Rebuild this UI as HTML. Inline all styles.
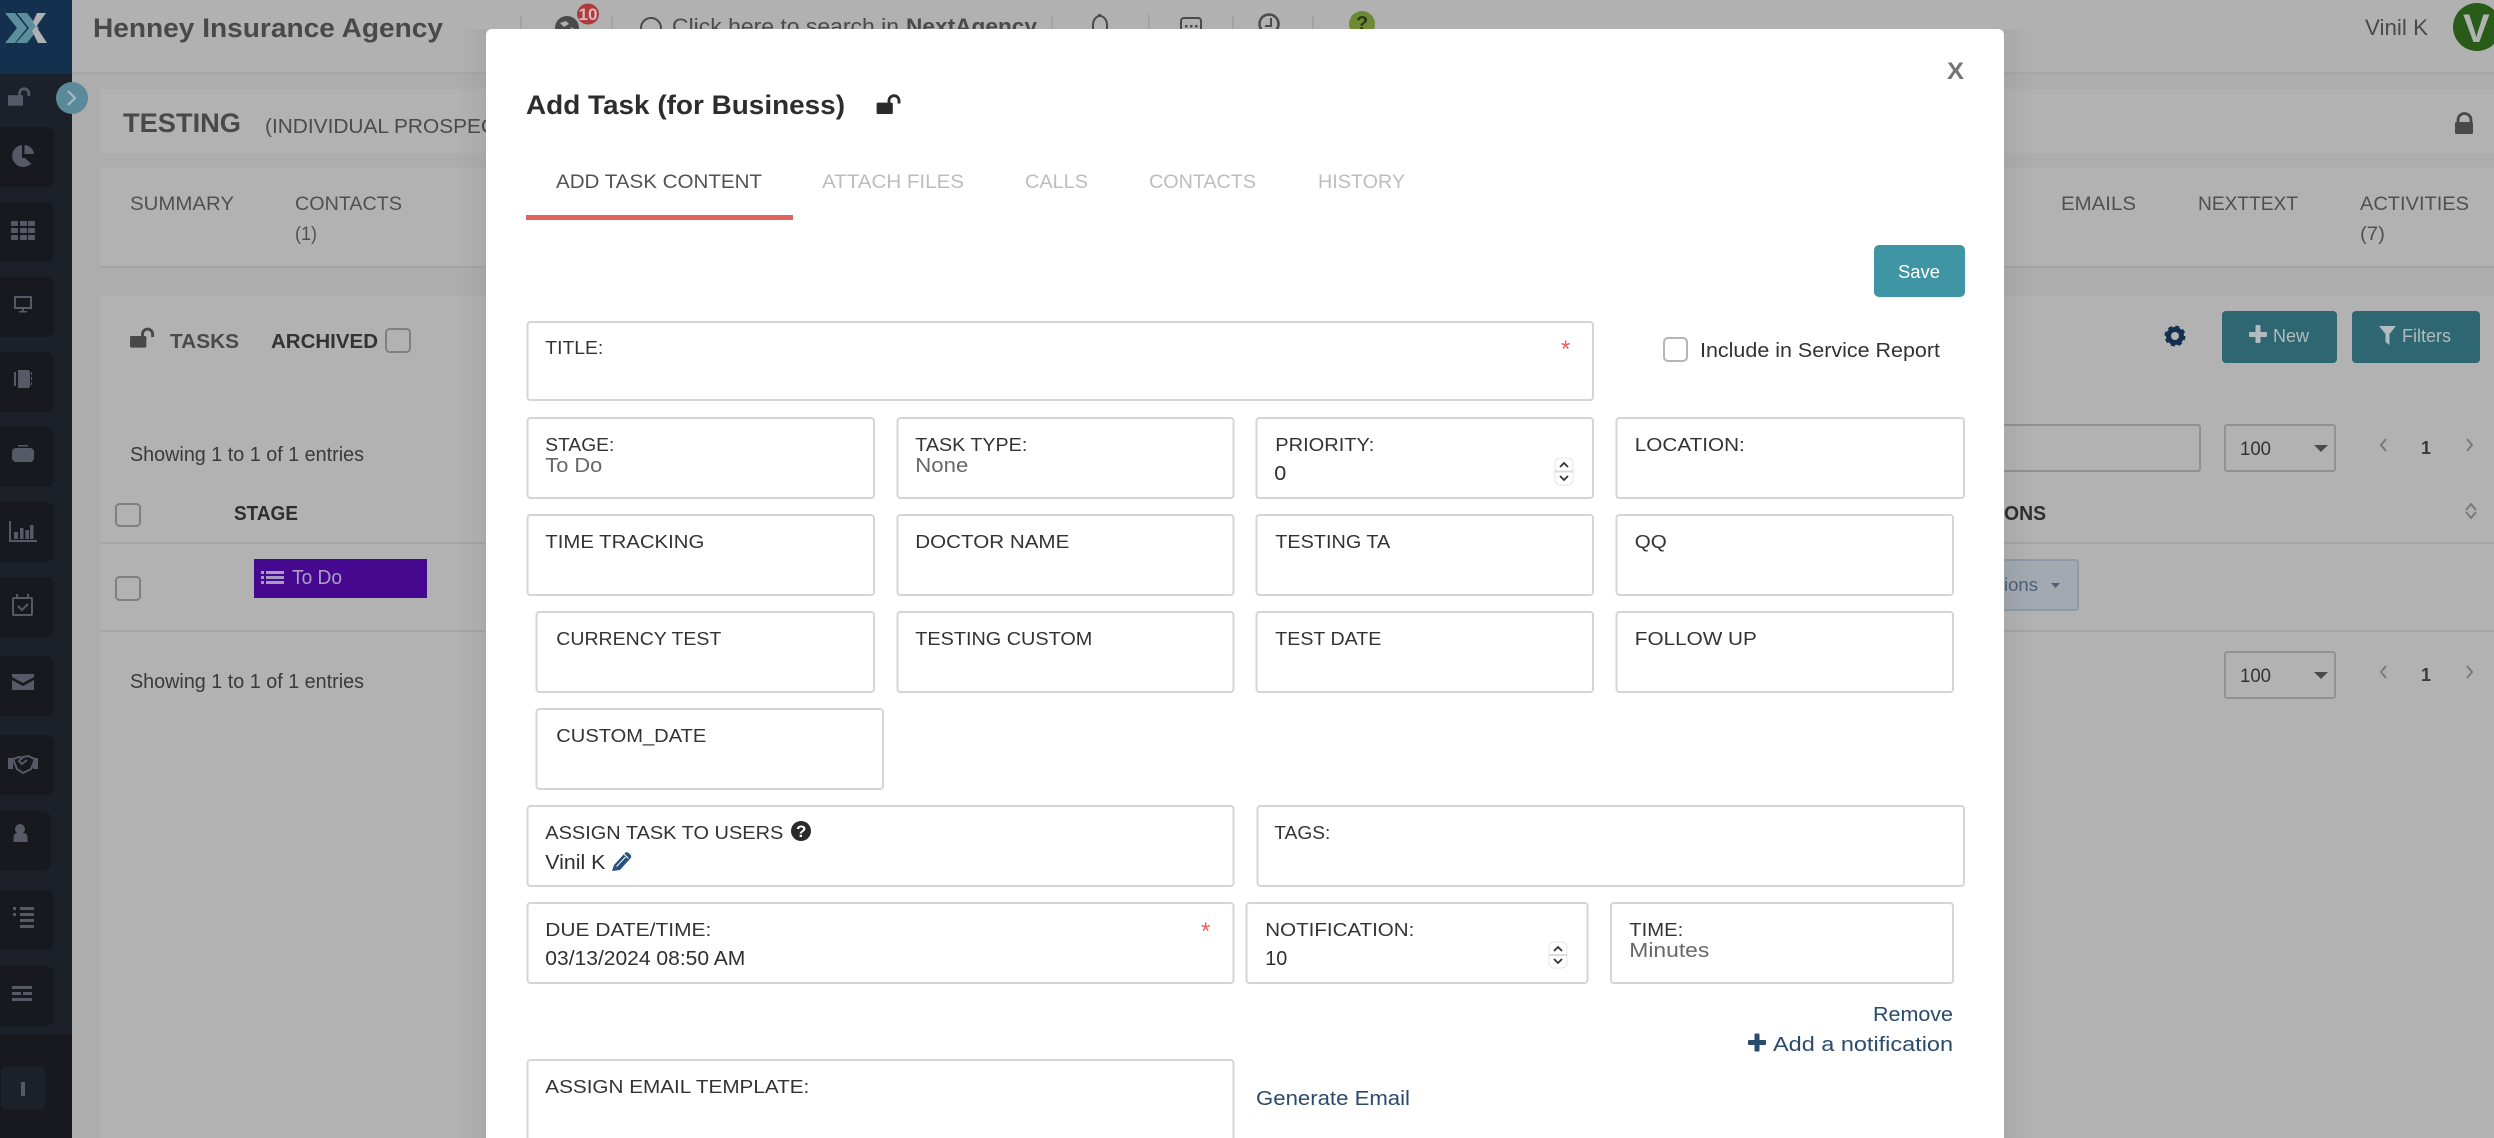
<!DOCTYPE html>
<html lang="en"><head><meta charset="utf-8"><title>Add Task</title>
<style>
html,body{margin:0;padding:0;background:#adadad;width:2494px;height:1138px;overflow:hidden}
svg{display:block;position:absolute;left:0;top:0}
text{font-family:"Liberation Sans",sans-serif;white-space:pre}
.l{font-size:18.5px;fill:#333}
.v{font-size:20px;fill:#2f2f2f}
.g{font-size:20px;fill:#686868}
.f{fill:#fff;stroke:#d5d5d5;stroke-width:2}
.i{fill:#555a66}
.is{fill:none;stroke:#555a66;stroke-width:2}
.pg{fill:none;stroke:#7a7a7a;stroke-width:2}
.lk{fill:#2a4a6e;font-size:20px}
.b{font-weight:700}
</style></head><body>
<svg width="2494" height="1138" viewBox="0 0 2494 1138" xmlns="http://www.w3.org/2000/svg">
<defs>
<symbol id="ul" viewBox="0 0 26 21"><rect x="0" y="9" width="17" height="12" rx="1.5" fill="currentColor"/><path d="M13 10V7a5.2 5.2 0 0 1 10.5 0v3" fill="none" stroke="currentColor" stroke-width="3"/></symbol>
<linearGradient id="shL" x1="0" x2="1" y1="0" y2="0"><stop offset="0" stop-color="#000" stop-opacity="0"/><stop offset="1" stop-color="#000" stop-opacity=".05"/></linearGradient>
<linearGradient id="shR" x1="0" x2="1" y1="0" y2="0"><stop offset="0" stop-color="#000" stop-opacity=".05"/><stop offset="1" stop-color="#000" stop-opacity="0"/></linearGradient>
</defs>

<!-- page bg -->
<rect width="2494" height="1138" fill="#adadad"/>
<!-- header -->
<rect x="72" y="0" width="2422" height="72" fill="#b1b1b1"/>
<rect x="72" y="72" width="2422" height="2" fill="#a6a6a6"/>
<!-- cards -->
<rect x="100" y="89" width="2394" height="64" fill="#b2b2b2"/>
<rect x="100" y="168" width="2394" height="99" fill="#b2b2b2"/>
<rect x="100" y="266" width="2394" height="2" fill="#a5a5a5"/>
<rect x="100" y="296" width="2394" height="842" fill="#b2b2b2"/>

<!-- sidebar -->
<rect x="0" y="0" width="72" height="1138" fill="#1c2028"/>
<rect x="0" y="0" width="72" height="74" fill="#14304f"/>
<rect x="0" y="1034" width="72" height="104" fill="#17191e"/>
<g fill="#17191e">
<rect x="-8" y="127" width="62" height="60" rx="8"/>
<rect x="-8" y="202" width="62" height="60" rx="8"/>
<rect x="-8" y="277" width="62" height="60" rx="8"/>
<rect x="-8" y="352" width="62" height="60" rx="8"/>
<rect x="-8" y="427" width="62" height="60" rx="8"/>
<rect x="-8" y="502" width="62" height="60" rx="8"/>
<rect x="-8" y="577" width="62" height="60" rx="8"/>
<rect x="-8" y="656" width="62" height="60" rx="8"/>
<rect x="-8" y="735" width="62" height="60" rx="8"/>
<rect x="-8" y="811" width="59" height="60" rx="8"/>
<rect x="-8" y="890" width="62" height="60" rx="8"/>
<rect x="-8" y="966" width="62" height="60" rx="8"/>
</g>
<rect x="1" y="1066" width="45" height="44" rx="7" fill="#1c2028"/>
<rect x="21" y="1082" width="4" height="14" fill="#555a66"/>
<!-- logo -->
<polygon points="5,13 15,13 27,28 15,43 5,43 17,28" fill="#5b8f9c"/>
<polygon points="17,13 27,13 39,28 27,43 16,43 29,28" fill="#5b8f9c"/>
<polygon points="37,13 46,13 36,27 33,22" fill="#aeb0b2"/>
<polygon points="32,31 36,26 47,43 38,43" fill="#aeb0b2"/>
<!-- sidebar icons -->
<use href="#ul" x="8" y="87" width="23" height="19" color="#555a66"/>
<circle cx="72" cy="98" r="16" fill="#5a8a99"/>
<path d="M68 91l7 7-7 7" fill="none" stroke="#a9bcc2" stroke-width="2"/>
<path class="i" d="M22 145a11 11 0 1 0 12 13H22zM24.500 145a10 10 0 0 1 9.500 9h-9.500zM25 158h9l-2.500 6z"/>
<g class="i">
<rect x="11" y="221" width="7" height="5" rx="1"/><rect x="20" y="221" width="7" height="5" rx="1"/><rect x="28" y="221" width="7" height="5" rx="1"/>
<rect x="11" y="228" width="7" height="5" rx="1"/><rect x="20" y="228" width="7" height="5" rx="1"/><rect x="28" y="228" width="7" height="5" rx="1"/>
<rect x="11" y="235" width="7" height="5" rx="1"/><rect x="20" y="235" width="7" height="5" rx="1"/><rect x="28" y="235" width="7" height="5" rx="1"/>
</g>
<rect class="is" x="15" y="297" width="16" height="11"/><rect class="i" x="22" y="308" width="2" height="3"/><rect class="i" x="19" y="311" width="8" height="1.500"/>
<path class="i" d="M14 372h2v14h-2zM18 370h10a2 2 0 0 1 2 2v14a2 2 0 0 1-2 2H18zM31 372h1v3h-1zM31 377h1v3h-1zM31 382h1v3h-1z"/>
<rect class="i" x="12" y="448" width="22" height="14" rx="4"/><rect class="i" x="18" y="445" width="10" height="1.500"/>
<path class="is" d="M10 521v20h27" stroke-width="1.500"/>
<g class="i"><rect x="14" y="532" width="4" height="7"/><rect x="20" y="528" width="3.500" height="11"/><rect x="25.500" y="530" width="3.500" height="9"/><rect x="30" y="525" width="3.500" height="14"/></g>
<rect class="is" x="13" y="598" width="19" height="17" rx="1"/><path class="is" d="M17 594v5M28 594v5" stroke-width="2.500"/><path class="is" d="M18 606l4 4 6-6" stroke-width="1.500"/>
<path class="i" d="M12 674h22v3l-11 6-11-6zM12 680l11 6 11-6v10H12z"/>
<path class="is" d="M13 759l4 10 6 4 8-4 4-10-7-3-5 1-4 4 3 3 5-4M13 759l6-2 4 1" stroke-width="1.500"/><rect class="i" x="8" y="758" width="5" height="11"/><rect class="i" x="33" y="758" width="5" height="11"/>
<circle class="i" cx="20" cy="829" r="5"/><path class="i" d="M13 842v-5a4 4 0 0 1 4-4h6a4 4 0 0 1 4 4v5z" transform="translate(.5 0)"/>
<g class="i"><rect x="13" y="907" width="3" height="3"/><rect x="20" y="907" width="14" height="3"/><rect x="13" y="913" width="3" height="3"/><rect x="20" y="913" width="14" height="3"/><rect x="20" y="919" width="14" height="3"/><rect x="20" y="925" width="14" height="3"/></g>
<g class="i"><rect x="12" y="986" width="20" height="3"/><rect x="12" y="992" width="9" height="3"/><rect x="23" y="992" width="9" height="3"/><rect x="12" y="998" width="20" height="3"/></g>

<!-- header content -->
<text class="b" x="93" y="37" font-size="26.500" textLength="350" lengthAdjust="spacingAndGlyphs" fill="#494949">Henney Insurance Agency</text>
<g fill="#a0a0a0"><rect x="520" y="16" width="1.500" height="16"/><rect x="611" y="16" width="1.500" height="16"/><rect x="1051" y="16" width="1.500" height="16"/><rect x="1148" y="14" width="1.500" height="18"/><rect x="1232" y="16" width="1.500" height="16"/><rect x="1312" y="16" width="1.500" height="16"/></g>
<circle cx="567" cy="28" r="12" fill="#4a4a4a"/><path d="M560 23l6-2 3 3-5 3zM570 27l5 2-2 3z" fill="#b0b0b0"/>
<ellipse cx="588" cy="14" rx="11" ry="10.500" fill="#ad3a3e"/>
<text class="b" x="578.500" y="20" font-size="17" textLength="19" lengthAdjust="spacingAndGlyphs" fill="#dcb9b9">10</text>
<circle cx="651" cy="28" r="10" fill="none" stroke="#4a4a4a" stroke-width="2"/>
<text x="672" y="34" font-size="22" textLength="227" lengthAdjust="spacingAndGlyphs" fill="#4a4a4a">Click here to search in</text>
<text class="b" x="906" y="34" font-size="22" textLength="131" lengthAdjust="spacingAndGlyphs" fill="#4a4a4a">NextAgency</text>
<path d="M1093 32v-7a7 9 0 0 1 14 0v7" fill="none" stroke="#4a4a4a" stroke-width="2"/><rect x="1098" y="14" width="3" height="3" fill="#4a4a4a"/>
<rect x="1181" y="18" width="20" height="20" rx="3" fill="none" stroke="#4a4a4a" stroke-width="2"/><g fill="#4a4a4a"><rect x="1185" y="25" width="2.500" height="2.500"/><rect x="1190" y="25" width="2.500" height="2.500"/><rect x="1195" y="25" width="2.500" height="2.500"/></g>
<circle cx="1269" cy="24" r="9.500" fill="none" stroke="#4a4a4a" stroke-width="2.500"/><path d="M1271 18v8h-6" fill="none" stroke="#4a4a4a" stroke-width="2"/>
<circle cx="1362" cy="24" r="13" fill="#6f8a36"/><text class="b" x="1356" y="30" font-size="20" fill="#2c3a14">?</text>
<text x="2365" y="35" font-size="22" textLength="63" lengthAdjust="spacingAndGlyphs" fill="#4a4a4a">Vinil K</text>
<circle cx="2477" cy="27" r="24" fill="#285a18"/>
<text class="b" x="2463" y="42" font-size="40" fill="#b2b2b2">V</text>

<!-- testing card -->
<text class="b" x="123" y="132" font-size="27" textLength="118" lengthAdjust="spacingAndGlyphs" fill="#494949">TESTING</text>
<text x="265" y="133" font-size="20" textLength="231" lengthAdjust="spacingAndGlyphs" fill="#4a4a4a">(INDIVIDUAL PROSPEC</text>
<path d="M2458 123v-3a6.500 6.500 0 0 1 13 0v3" fill="none" stroke="#494949" stroke-width="2.800"/><rect x="2455" y="122" width="18" height="12" rx="1.500" fill="#494949"/>

<!-- tabs -->
<text x="130" y="210" font-size="19.500" textLength="104" lengthAdjust="spacingAndGlyphs" fill="#505050">SUMMARY</text>
<text x="295" y="210" font-size="19.500" textLength="107" lengthAdjust="spacingAndGlyphs" fill="#505050">CONTACTS</text>
<text x="295" y="240" font-size="19.500" textLength="22" lengthAdjust="spacingAndGlyphs" fill="#505050">(1)</text>
<text x="2061" y="210" font-size="19.500" textLength="75" lengthAdjust="spacingAndGlyphs" fill="#505050">EMAILS</text>
<text x="2198" y="210" font-size="19.500" textLength="100" lengthAdjust="spacingAndGlyphs" fill="#505050">NEXTTEXT</text>
<text x="2360" y="210" font-size="19.500" textLength="109" lengthAdjust="spacingAndGlyphs" fill="#505050">ACTIVITIES</text>
<text x="2360" y="240" font-size="19.500" textLength="25" lengthAdjust="spacingAndGlyphs" fill="#505050">(7)</text>

<!-- tasks card -->
<use href="#ul" x="130" y="327" width="25" height="21" color="#484848"/>
<text class="b" x="170" y="348" font-size="20" textLength="69" lengthAdjust="spacingAndGlyphs" fill="#4a4a4a">TASKS</text>
<text class="b" x="271" y="348" font-size="20" textLength="107" lengthAdjust="spacingAndGlyphs" fill="#333">ARCHIVED</text>
<rect x="386" y="329" width="24" height="23" rx="3.500" fill="none" stroke="#808080" stroke-width="2"/>
<text x="130" y="461" font-size="20" textLength="234" lengthAdjust="spacingAndGlyphs" fill="#3a3a3a">Showing 1 to 1 of 1 entries</text>
<rect x="116" y="504" width="24" height="22" rx="3.500" fill="none" stroke="#808080" stroke-width="2"/>
<text class="b" x="234" y="520" font-size="20" textLength="64" lengthAdjust="spacingAndGlyphs" fill="#2e2e2e">STAGE</text>
<rect x="100" y="542" width="2394" height="2" fill="#a5a5a5"/>
<rect x="254" y="559" width="173" height="39" fill="#45088f"/>
<g fill="#a99ac2"><rect x="261" y="571" width="3" height="3"/><rect x="266" y="571" width="18" height="3"/><rect x="261" y="576" width="3" height="3"/><rect x="266" y="576" width="18" height="3"/><rect x="261" y="581" width="3" height="3"/><rect x="266" y="581" width="18" height="3"/></g>
<text x="292" y="584" font-size="20" textLength="50" lengthAdjust="spacingAndGlyphs" fill="#ab9fc4">To Do</text>
<rect x="116" y="577" width="24" height="23" rx="3.500" fill="none" stroke="#808080" stroke-width="2"/>
<rect x="100" y="630" width="2394" height="2" fill="#a5a5a5"/>
<text x="130" y="688" font-size="20" textLength="234" lengthAdjust="spacingAndGlyphs" fill="#3a3a3a">Showing 1 to 1 of 1 entries</text>

<!-- right table tools -->
<circle cx="2175" cy="336" r="6.500" fill="none" stroke="#14304f" stroke-width="5"/>
<circle cx="2175" cy="336" r="9" fill="none" stroke="#14304f" stroke-width="3" stroke-dasharray="4 3.070"/>
<rect x="2222" y="311" width="115" height="52" rx="4" fill="#2e6672"/>
<rect x="2249" y="332" width="18" height="5" rx="1" fill="#b0bcbf"/><rect x="2255.500" y="325" width="5" height="18" rx="1" fill="#b0bcbf"/>
<text x="2273" y="342" font-size="18.500" textLength="36" lengthAdjust="spacingAndGlyphs" fill="#b0bcbf">New</text>
<rect x="2352" y="311" width="128" height="52" rx="4" fill="#2e6672"/>
<path d="M2379 326h17l-6.500 8v11l-4-3v-8z" fill="#b0bcbf"/>
<text x="2402" y="342" font-size="18.500" textLength="49" lengthAdjust="spacingAndGlyphs" fill="#b0bcbf">Filters</text>
<rect x="1990" y="425" width="210" height="46" rx="2" fill="none" stroke="#919191" stroke-width="2"/>
<rect x="2225" y="425" width="110" height="46" rx="2" fill="none" stroke="#919191" stroke-width="2"/>
<text x="2240" y="455" font-size="19.500" textLength="31" lengthAdjust="spacingAndGlyphs" fill="#333">100</text>
<path d="M2314 445h14l-7 7z" fill="#4a4a4a"/>
<path class="pg" d="M2386 439l-5 6 5 6M2467 439l5 6-5 6"/>
<text class="b" x="2421" y="454" font-size="18" textLength="10" lengthAdjust="spacingAndGlyphs" fill="#3a3a3a">1</text>
<text class="b" x="2004" y="520" font-size="20" textLength="42" lengthAdjust="spacingAndGlyphs" fill="#2e2e2e">ONS</text>
<path class="pg" d="M2466 510l5-6 5 6M2466 512l5 6 5-6"/>
<rect x="1990" y="560" width="88" height="50" rx="3" fill="#a3a9b0" stroke="#8f99a8" stroke-width="2"/>
<text x="2004" y="591" font-size="18.500" textLength="34" lengthAdjust="spacingAndGlyphs" fill="#4d6078">ions</text>
<path d="M2051 583h9l-4.500 5z" fill="#4d6078"/>
<rect x="2225" y="652" width="110" height="46" rx="2" fill="none" stroke="#919191" stroke-width="2"/>
<text x="2240" y="682" font-size="19.500" textLength="31" lengthAdjust="spacingAndGlyphs" fill="#333">100</text>
<path d="M2314 672h14l-7 7z" fill="#4a4a4a"/>
<path class="pg" d="M2386 666l-5 6 5 6M2467 666l5 6-5 6"/>
<text class="b" x="2421" y="681" font-size="18" textLength="10" lengthAdjust="spacingAndGlyphs" fill="#3a3a3a">1</text>

<!-- modal shadows -->
<rect x="456" y="29" width="30" height="1109" fill="url(#shL)"/>
<rect x="2004" y="29" width="30" height="1109" fill="url(#shR)"/>
<!-- modal -->
<rect x="486" y="29" width="1518" height="1115" rx="6" fill="#fff"/>
<text class="b" x="526" y="114" font-size="27" textLength="319" lengthAdjust="spacingAndGlyphs" fill="#2d2d2d">Add Task (for Business)</text>
<use href="#ul" x="876" y="94" width="26" height="20" color="#2b2b2b"/>
<text class="b" x="1947" y="79" font-size="24" textLength="17" lengthAdjust="spacingAndGlyphs" fill="#757575">X</text>

<text x="556" y="188" font-size="19" textLength="206" lengthAdjust="spacingAndGlyphs" fill="#525252">ADD TASK CONTENT</text>
<text x="822" y="188" font-size="19" textLength="142" lengthAdjust="spacingAndGlyphs" fill="#bdbdbd">ATTACH FILES</text>
<text x="1025" y="188" font-size="19" textLength="63" lengthAdjust="spacingAndGlyphs" fill="#bdbdbd">CALLS</text>
<text x="1149" y="188" font-size="19" textLength="107" lengthAdjust="spacingAndGlyphs" fill="#bdbdbd">CONTACTS</text>
<text x="1318" y="188" font-size="19" textLength="87" lengthAdjust="spacingAndGlyphs" fill="#bdbdbd">HISTORY</text>
<rect x="526" y="215" width="267" height="5" fill="#e2635c"/>

<rect x="1874" y="245" width="91" height="52" rx="5" fill="#4095a5"/>
<text x="1898" y="278" font-size="18.500" textLength="42" lengthAdjust="spacingAndGlyphs" fill="#fff">Save</text>

<!-- field boxes -->
<rect class="f" x="527.500" y="322" width="1065.500" height="78" rx="3"/>
<rect class="f" x="527.500" y="418" width="346.500" height="80" rx="3"/>
<rect class="f" x="897.500" y="418" width="336" height="80" rx="3"/>
<rect class="f" x="1256.500" y="418" width="336.500" height="80" rx="3"/>
<rect class="f" x="1616.500" y="418" width="347.500" height="80" rx="3"/>
<rect class="f" x="527.500" y="515" width="346.500" height="80" rx="3"/>
<rect class="f" x="897.500" y="515" width="336" height="80" rx="3"/>
<rect class="f" x="1256.500" y="515" width="336.500" height="80" rx="3"/>
<rect class="f" x="1616.500" y="515" width="336.500" height="80" rx="3"/>
<rect class="f" x="536.500" y="612" width="337.500" height="80" rx="3"/>
<rect class="f" x="897.500" y="612" width="336" height="80" rx="3"/>
<rect class="f" x="1256.500" y="612" width="336.500" height="80" rx="3"/>
<rect class="f" x="1616.500" y="612" width="336.500" height="80" rx="3"/>
<rect class="f" x="536.500" y="709" width="346.500" height="80" rx="3"/>
<rect class="f" x="527.500" y="806" width="706" height="80" rx="3"/>
<rect class="f" x="1257.500" y="806" width="706.500" height="80" rx="3"/>
<rect class="f" x="527.500" y="903" width="706" height="80" rx="3"/>
<rect class="f" x="1246.500" y="903" width="341" height="80" rx="3"/>
<rect class="f" x="1611" y="903" width="342" height="80" rx="3"/>
<rect class="f" x="527.500" y="1060" width="706" height="100" rx="3"/>

<g transform="translate(-.7 0)">
<text class="l" x="546" y="354" textLength="58" lengthAdjust="spacingAndGlyphs">TITLE:</text>
<text class="l" x="546" y="451" textLength="69" lengthAdjust="spacingAndGlyphs">STAGE:</text>
<text class="g" x="546" y="472" textLength="57" lengthAdjust="spacingAndGlyphs">To Do</text>
<text class="l" x="916" y="451" textLength="112" lengthAdjust="spacingAndGlyphs">TASK TYPE:</text>
<text class="g" x="916" y="472" textLength="53" lengthAdjust="spacingAndGlyphs">None</text>
<text class="l" x="1276" y="451" textLength="99" lengthAdjust="spacingAndGlyphs">PRIORITY:</text>
<text class="v" x="1275" y="480" textLength="12" lengthAdjust="spacingAndGlyphs">0</text>
<text class="l" x="1635.500" y="451" textLength="110" lengthAdjust="spacingAndGlyphs">LOCATION:</text>
<text class="l" x="546" y="548" textLength="159" lengthAdjust="spacingAndGlyphs">TIME TRACKING</text>
<text class="l" x="916" y="548" textLength="154" lengthAdjust="spacingAndGlyphs">DOCTOR NAME</text>
<text class="l" x="1276" y="548" textLength="115" lengthAdjust="spacingAndGlyphs">TESTING TA</text>
<text class="l" x="1635.500" y="548" textLength="32" lengthAdjust="spacingAndGlyphs">QQ</text>
<text class="l" x="557" y="645" textLength="165" lengthAdjust="spacingAndGlyphs">CURRENCY TEST</text>
<text class="l" x="916" y="645" textLength="177" lengthAdjust="spacingAndGlyphs">TESTING CUSTOM</text>
<text class="l" x="1276" y="645" textLength="106" lengthAdjust="spacingAndGlyphs">TEST DATE</text>
<text class="l" x="1635.500" y="645" textLength="122" lengthAdjust="spacingAndGlyphs">FOLLOW UP</text>
<text class="l" x="557" y="742" textLength="150" lengthAdjust="spacingAndGlyphs">CUSTOM_DATE</text>
<text class="l" x="546" y="839" textLength="238" lengthAdjust="spacingAndGlyphs">ASSIGN TASK TO USERS</text>
<text class="v" x="546" y="869" textLength="60" lengthAdjust="spacingAndGlyphs">Vinil K</text>
<text class="l" x="1275" y="839" textLength="56" lengthAdjust="spacingAndGlyphs">TAGS:</text>
<text class="l" x="546" y="936" textLength="166" lengthAdjust="spacingAndGlyphs">DUE DATE/TIME:</text>
<text class="v" x="546" y="965" textLength="200" lengthAdjust="spacingAndGlyphs">03/13/2024 08:50 AM</text>
<text class="l" x="1266" y="936" textLength="149" lengthAdjust="spacingAndGlyphs">NOTIFICATION:</text>
<text class="v" x="1266" y="965" textLength="22" lengthAdjust="spacingAndGlyphs">10</text>
<text class="l" x="1630" y="936" textLength="54" lengthAdjust="spacingAndGlyphs">TIME:</text>
<text class="g" x="1630" y="957" textLength="80" lengthAdjust="spacingAndGlyphs">Minutes</text>
<text class="l" x="546" y="1093" textLength="264" lengthAdjust="spacingAndGlyphs">ASSIGN EMAIL TEMPLATE:</text>
</g>

<text x="1561" y="357" font-size="24" fill="#e8605a">*</text>
<rect x="1664" y="338" width="23" height="23" rx="4" fill="#fff" stroke="#b5b5b5" stroke-width="2"/>
<text x="1700" y="357" font-size="20" textLength="240" lengthAdjust="spacingAndGlyphs" fill="#333">Include in Service Report</text>

<rect x="1555" y="458" width="18" height="27" rx="5" fill="#fff" stroke="#e6e6e6"/><rect x="1555" y="470.500" width="18" height="2" fill="#dcdcdc"/>
<path d="M1560 467l4-4 4 4M1560 476l4 4 4-4" fill="none" stroke="#333" stroke-width="1.800"/>

<circle cx="801" cy="831" r="10" fill="#2b2b2b"/><text class="b" x="796" y="837" font-size="17" fill="#fff">?</text>
<path d="M612 871l2-6 11-12a2.500 2.500 0 0 1 3.500 0l2 1.800a2.500 2.500 0 0 1 0 3.500L620 870z" fill="#25507f"/>
<path d="M616.500 866.500l9-9.500M623.500 853.500l5 5" fill="none" stroke="#fff" stroke-width="1"/>

<text x="1201" y="939" font-size="24" fill="#e8605a">*</text>
<rect x="1549" y="942" width="18" height="26" rx="5" fill="#fff" stroke="#e6e6e6"/><rect x="1549" y="954" width="18" height="2" fill="#dcdcdc"/>
<path d="M1554 951l4-4 4 4M1554 959l4 4 4-4" fill="none" stroke="#333" stroke-width="1.800"/>

<text class="lk" x="1873" y="1021" textLength="80" lengthAdjust="spacingAndGlyphs">Remove</text>
<rect x="1748" y="1040" width="18" height="5" rx="1" fill="#2a4a6e"/><rect x="1754.500" y="1033.500" width="5" height="18" rx="1" fill="#2a4a6e"/>
<text class="lk" x="1773" y="1051" textLength="180" lengthAdjust="spacingAndGlyphs">Add a notification</text>
<text class="lk" x="1256" y="1105" textLength="154" lengthAdjust="spacingAndGlyphs">Generate Email</text>
</svg>
</body></html>
